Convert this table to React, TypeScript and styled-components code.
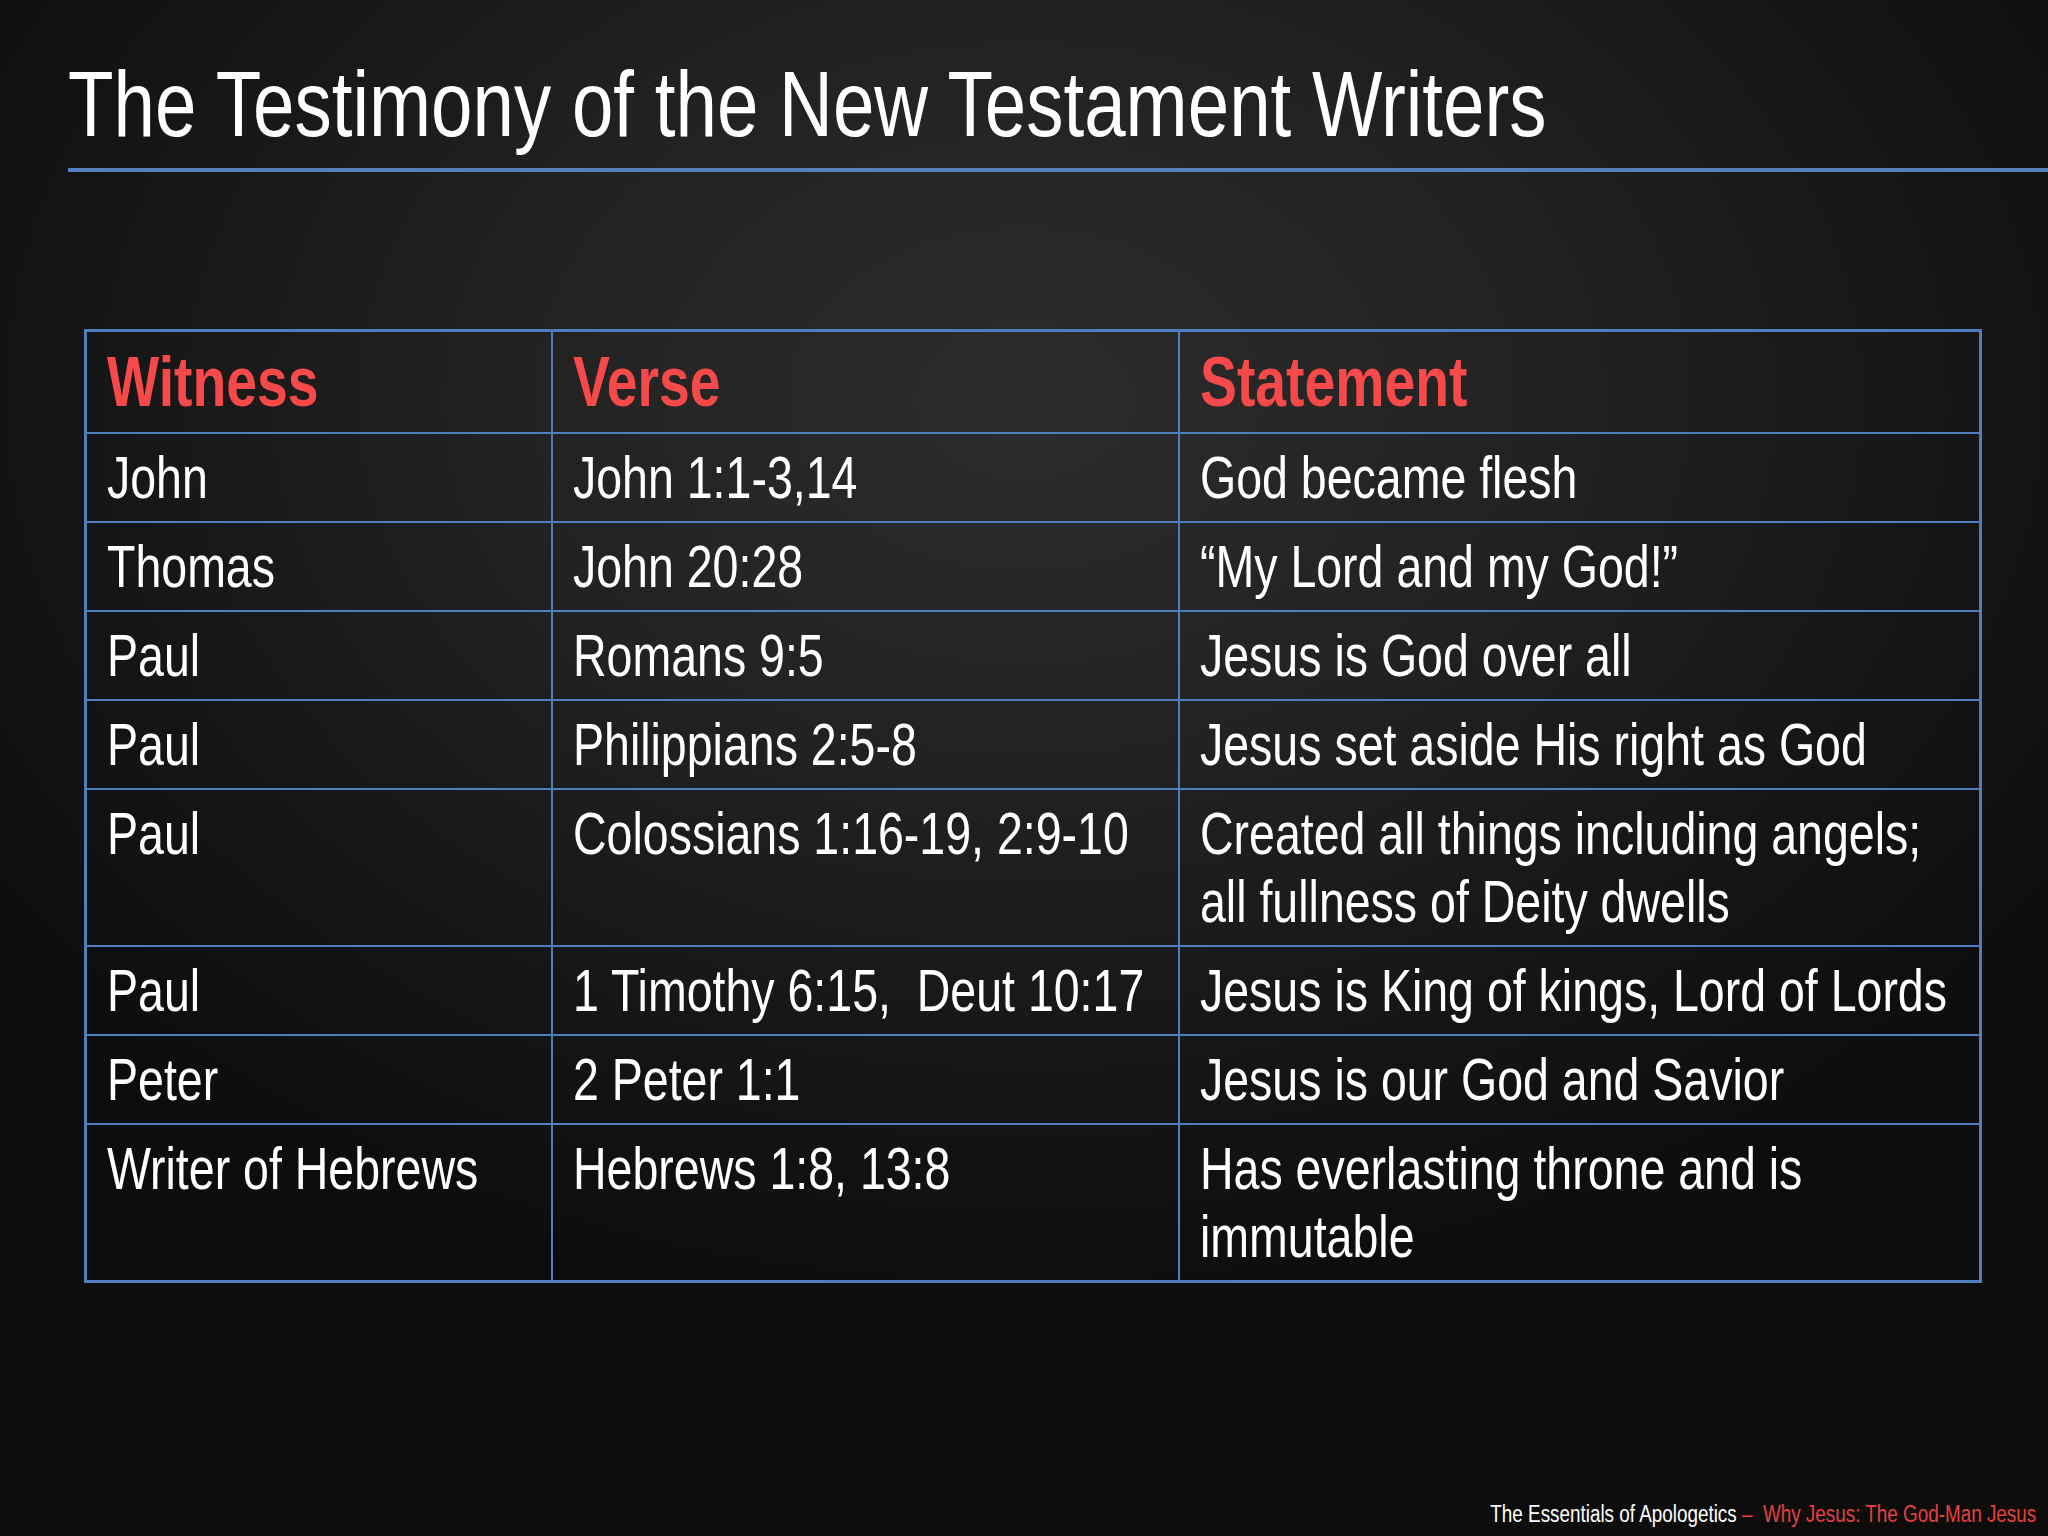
import React from "react";
import styled, { createGlobalStyle } from "styled-components";

// No narrow face is installed, so Liberation Sans is squeezed to Arial Narrow proportions.
const TITLE_SCALE = 0.81;
const HEAD_SCALE = 0.79;
const BODY_SCALE = 0.775;

const GlobalStyle = createGlobalStyle`
  html, body {
    margin: 0;
    padding: 0;
    background: #0d0d0d;
  }
  body {
    font-family: "Liberation Sans Narrow", "Liberation Sans", Arial, sans-serif;
  }
`;

const Styles = {
  Slide: styled.div`
    box-sizing: border-box;
    width: 2048px;
    height: 1536px;
    display: flex;
    flex-direction: column;
    overflow: hidden;
    background: radial-gradient(
      ellipse 62% 60% at 50% 26%,
      #2c2c2d 0%,
      #222223 40%,
      #151515 75%,
      #0d0d0d 100%
    );
    color: #ffffff;
  `,

  Header: styled.header`
    padding: 51px 0 0 68px;
  `,

  Title: styled.h1`
    margin: 0;
    font-size: 92px;
    font-weight: 400;
    line-height: 106px;
    white-space: nowrap;
    transform: scaleX(${TITLE_SCALE});
    transform-origin: 0 0;
  `,

  Rule: styled.div`
    height: 4px;
    margin-top: 11px;
    background: #5580c0;
  `,

  Table: styled.table`
    margin: 157px 0 0 84px;
    width: 1895px;
    table-layout: fixed;
    border-collapse: collapse;
    border: 3px solid #4f7dbd;

    td,
    th {
      border: 2px solid #4f7dbd;
      padding: 10px 20px 9px;
      vertical-align: top;
      text-align: left;
      overflow: visible;
    }
  `,

  Col: styled.col<{ width: number }>`
    width: ${(props) => props.width}px;
  `,

  HeadCell: styled.th`
    color: #f64a4a;
    font-size: 70px;
    font-weight: 700;
    line-height: 81px;
  `,

  Cell: styled.td`
    font-size: 60px;
    font-weight: 400;
    line-height: 68px;
    white-space: pre-wrap;
  `,

  Narrow: styled.div<{ scale: number }>`
    width: ${(props) => 100 / props.scale}%;
    transform: scaleX(${(props) => props.scale});
    transform-origin: 0 0;
  `,

  Footer: styled.footer`
    margin-top: auto;
    align-self: flex-end;
    padding: 0 14px 9px 0;
    font-size: 23px;
    line-height: 26px;
    white-space: pre;
    transform: scaleX(0.82);
    transform-origin: 100% 0;

    .red {
      color: #e64040;
    }
  `,
};

const rows = [
  ["John", "John 1:1-3,14", "God became flesh"],
  ["Thomas", "John 20:28", "\u201cMy Lord and my God!\u201d"],
  ["Paul", "Romans 9:5", "Jesus is God over all"],
  ["Paul", "Philippians 2:5-8", "Jesus set aside His right as God"],
  [
    "Paul",
    "Colossians 1:16-19, 2:9-10",
    "Created all things including angels;\nall fullness of Deity dwells",
  ],
  ["Paul", "1 Timothy 6:15,  Deut 10:17", "Jesus is King of kings, Lord of Lords"],
  ["Peter", "2 Peter 1:1", "Jesus is our God and Savior"],
  ["Writer of Hebrews", "Hebrews 1:8, 13:8", "Has everlasting throne and is\nimmutable"],
];

export default function App() {
  return (
    <>
      <GlobalStyle />
      <Styles.Slide>
        <Styles.Header>
          <Styles.Title>The Testimony of the New Testament Writers</Styles.Title>
          <Styles.Rule />
        </Styles.Header>

        <Styles.Table>
          <colgroup>
            <Styles.Col width={466} />
            <Styles.Col width={627} />
            <Styles.Col width={802} />
          </colgroup>
          <thead>
            <tr>
              {["Witness", "Verse", "Statement"].map((label) => (
                <Styles.HeadCell key={label}>
                  <Styles.Narrow scale={HEAD_SCALE}>{label}</Styles.Narrow>
                </Styles.HeadCell>
              ))}
            </tr>
          </thead>
          <tbody>
            {rows.map((row, i) => (
              <tr key={i}>
                {row.map((text, j) => (
                  <Styles.Cell key={j}>
                    <Styles.Narrow scale={BODY_SCALE}>{text}</Styles.Narrow>
                  </Styles.Cell>
                ))}
              </tr>
            ))}
          </tbody>
        </Styles.Table>

        <Styles.Footer>
          The Essentials of Apologetics <span className="red">–  Why Jesus: The God-Man Jesus</span>
        </Styles.Footer>
      </Styles.Slide>
    </>
  );
}
